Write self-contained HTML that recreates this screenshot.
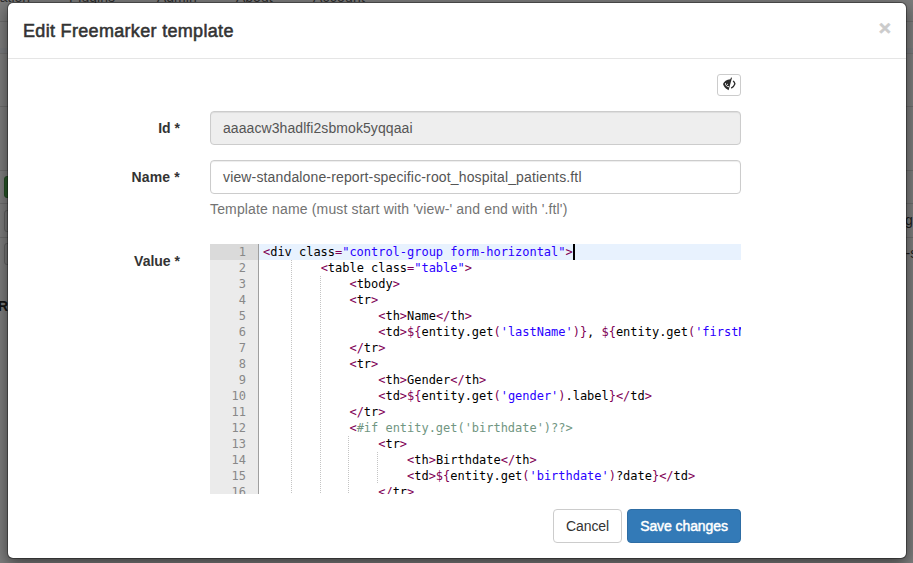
<!DOCTYPE html>
<html lang="en">
<head>
<meta charset="utf-8">
<title>Edit Freemarker template</title>
<style>
*{box-sizing:border-box}
html,body{margin:0;padding:0}
body{width:913px;height:563px;overflow:hidden;position:relative;background:#7f7f7f;font-family:"Liberation Sans",Arial,Helvetica,sans-serif;font-size:14px;line-height:1.42857143;color:#333}
/* darkened page behind the modal */
.bg{position:absolute;left:0;top:0;width:913px;height:563px;overflow:hidden}
.bg .nav{position:absolute;left:0;top:-29px;width:913px;height:51px;background:#7c7c7c;border-bottom:1px solid #6e6e6e}
.bg .nav span{position:absolute;top:16px;line-height:20px;font-size:14px;color:#2e2e2e;white-space:nowrap}
.bg .hl{position:absolute;left:0;width:913px;height:1px;background:#6f6f6f}
.bg .gbtn{position:absolute;left:4px;top:176px;width:60px;height:22px;border-radius:3px;background:#2a5a2a;border:1px solid #234c23}
.bg .obox{position:absolute;left:4px;width:60px;height:22px;border-radius:3px;border:1px solid #646464;background:#7b7b7b}
.bg .t{position:absolute;white-space:nowrap;color:#141414;font-size:14px;line-height:20px}
/* modal */
.modal{position:absolute;left:7px;top:2px;width:900px;height:557px;background:#fff;border:1px solid rgba(0,0,0,.35);border-radius:6px;box-shadow:0 5px 15px rgba(0,0,0,.5);background-clip:padding-box}
.mh{height:56px;padding:15px;border-bottom:1px solid #e5e5e5;position:relative}
.mh h4{margin:0;font-size:18px;font-weight:500;line-height:26px;color:#333;letter-spacing:.32px;-webkit-text-stroke:.55px #333}
.mh .close{position:absolute;right:15px;top:14px;-webkit-text-stroke:.6px #000;font-size:21px;font-weight:bold;line-height:1;color:#000;opacity:.2;text-shadow:0 1px 0 #fff;background:none;border:0;padding:0;font-family:inherit}
.mb{position:absolute;left:0;top:55px;width:898px;height:499px}
.eye{position:absolute;left:709px;top:16px;width:24px;height:22px;border:1px solid #ccc;border-radius:3px;background:#fff;padding:0}
.eye svg{position:absolute;left:4px;top:2px}
label{position:absolute;left:0;width:172px;text-align:right;font-weight:bold;color:#333;line-height:20px;margin:0}
.inp{position:absolute;left:202px;width:531px;height:34px;border:1px solid #ccc;border-radius:4px;padding:6px 12px;font-size:14px;line-height:20px;color:#555;background:#fff;box-shadow:inset 0 1px 1px rgba(0,0,0,.075);white-space:nowrap;overflow:hidden}
.inp.dis{background:#eee}
.help{letter-spacing:.155px;position:absolute;left:202px;top:141px;line-height:20px;color:#737373;white-space:nowrap}
/* ace editor */
.ace{position:absolute;left:202px;top:186px;width:531px;height:250px;overflow:hidden;background:#fff;font-family:"DejaVu Sans Mono","Liberation Mono",monospace;font-size:12px;line-height:16px;color:#000}
.gutter{position:absolute;left:0;top:0;width:49px;height:250px;background:#ebebeb;border-right:1px solid #9f9f9f;color:#888}
.gc{height:16px;padding-right:12px;text-align:right;letter-spacing:-0.024px}
.gc.act{background:#dadada}
.scr{position:absolute;left:49px;top:0;width:482px;height:250px;overflow:hidden}
.actl{position:absolute;left:0;top:0;width:482px;height:16px;background:#e8f2fe}
.txt{position:absolute;left:4px;top:0}
.ln{height:16px;white-space:pre;letter-spacing:-0.024px}
.k{color:#7f0055}.s{color:#2a00ff}.c{color:#719682}
.ig{display:inline-block;height:16px;vertical-align:top;background:linear-gradient(to bottom,#c4c4c4 50%,rgba(255,255,255,0) 50%) right top/1px 2px repeat-y}
.ig.last{background:none}
.cur{position:absolute;top:0;left:314px;width:2px;height:16px;background:#000}
.btn{position:absolute;top:451px;height:34px;border-radius:4px;font-size:14px;line-height:20px;padding:6px 12px;font-family:inherit;text-align:center;white-space:nowrap}
.btn.def{letter-spacing:-.1px;left:545px;width:69px;color:#333;background:#fff;border:1px solid #ccc}
.btn.pri{-webkit-text-stroke:.45px #fff;letter-spacing:-.09px;left:619px;width:114px;color:#fff;background:#337ab7;border:1px solid #2e6da4}
</style>
</head>
<body>
<div class="bg">
  <div class="nav">
    <span style="left:-36px">Navigation</span>
    <span style="left:69px">Plugins</span>
    <span style="left:157px">Admin</span>
    <span style="left:236px">About</span>
    <span style="left:313px;letter-spacing:.2px">Account</span>
  </div>
  <div class="hl" style="top:48px;height:5px;background:#7a7c7f"></div>
  <div class="hl" style="top:53px;background:#737373"></div>
  <div class="hl" style="top:106px"></div>
  <div class="hl" style="top:170px"></div>
  <div class="hl" style="top:203px"></div>
  <div class="hl" style="top:237px"></div>
  <div class="gbtn"></div>
  <div class="obox" style="top:210px"></div>
  <div class="obox" style="top:243px"></div>
  <div class="t" style="left:-2px;top:296px;font-weight:bold">R</div>
  <div class="t" style="left:905px;top:210px;color:#1c1c1c">g</div>
  <div class="t" style="left:905.5px;top:243px;color:#1c1c1c">-s</div>
</div>
<div class="modal">
  <div class="mh">
    <button class="close" type="button">×</button>
    <h4>Edit Freemarker template</h4>
  </div>
  <div class="mb">
    <button class="eye" type="button" title="Toggle preview"><svg width="16" height="16" viewBox="0 0 16 16"><path d="M10 0.7 L6.6 13.2 L5.5 12.6 C3.2 11.3 1.8 9.4 1 7 C2 4.4 4.6 2.4 8.4 2.3 L9 0.6 Z" fill="#2b2b2b"/><path d="M3.4 6.2 C3.5 8.4 4.8 9.6 7 9.8" fill="none" stroke="#fff" stroke-width="1"/><circle cx="5.5" cy="7.2" r="0.55" fill="#fff"/><path d="M11.2 3.9 C12 4.8 12.6 5.8 12.9 6.9 C12.3 8.7 11 10.2 9.2 11.2" stroke="#2b2b2b" stroke-width="1.4" fill="none"/></svg></button>
    <label style="top:60px">Id *</label>
    <div class="inp dis" style="top:53px;letter-spacing:.077px">aaaacw3hadlfi2sbmok5yqqaai</div>
    <label style="top:109px;letter-spacing:.17px">Name *</label>
    <div class="inp" style="top:102px;letter-spacing:.146px">view-standalone-report-specific-root_hospital_patients.ftl</div>
    <div class="help">Template name (must start with 'view-' and end with '.ftl')</div>
    <label style="top:193px">Value *</label>
    <div class="ace">
      <div class="gutter">
<div class="gc act">1</div>
<div class="gc">2</div>
<div class="gc">3</div>
<div class="gc">4</div>
<div class="gc">5</div>
<div class="gc">6</div>
<div class="gc">7</div>
<div class="gc">8</div>
<div class="gc">9</div>
<div class="gc">10</div>
<div class="gc">11</div>
<div class="gc">12</div>
<div class="gc">13</div>
<div class="gc">14</div>
<div class="gc">15</div>
<div class="gc">16</div>
      </div>
      <div class="scr">
        <div class="actl"></div>
        <div class="txt">
<div class="ln"><span class="k">&lt;</span>div class<span class="k">=</span><span class="s">"control-group form-horizontal"</span><span class="k">&gt;</span></div>
<div class="ln"><span class="ig">    </span><span class="ig last">    </span><span class="k">&lt;</span>table class<span class="k">=</span><span class="s">"table"</span><span class="k">&gt;</span></div>
<div class="ln"><span class="ig">    </span><span class="ig">    </span><span class="ig last">    </span><span class="k">&lt;</span>tbody<span class="k">&gt;</span></div>
<div class="ln"><span class="ig">    </span><span class="ig">    </span><span class="ig last">    </span><span class="k">&lt;</span>tr<span class="k">&gt;</span></div>
<div class="ln"><span class="ig">    </span><span class="ig">    </span><span class="ig last">    </span><span class="ig last">    </span><span class="k">&lt;</span>th<span class="k">&gt;</span>Name<span class="k">&lt;/</span>th<span class="k">&gt;</span></div>
<div class="ln"><span class="ig">    </span><span class="ig">    </span><span class="ig last">    </span><span class="ig last">    </span><span class="k">&lt;</span>td<span class="k">&gt;${</span>entity.get<span class="k">(</span><span class="s">'lastName'</span><span class="k">)}</span>, <span class="k">${</span>entity.get<span class="k">(</span><span class="s">'firstName'</span><span class="k">)}</span><span class="k">&lt;/</span>td<span class="k">&gt;</span></div>
<div class="ln"><span class="ig">    </span><span class="ig">    </span><span class="ig last">    </span><span class="k">&lt;/</span>tr<span class="k">&gt;</span></div>
<div class="ln"><span class="ig">    </span><span class="ig">    </span><span class="ig last">    </span><span class="k">&lt;</span>tr<span class="k">&gt;</span></div>
<div class="ln"><span class="ig">    </span><span class="ig">    </span><span class="ig last">    </span><span class="ig last">    </span><span class="k">&lt;</span>th<span class="k">&gt;</span>Gender<span class="k">&lt;/</span>th<span class="k">&gt;</span></div>
<div class="ln"><span class="ig">    </span><span class="ig">    </span><span class="ig last">    </span><span class="ig last">    </span><span class="k">&lt;</span>td<span class="k">&gt;${</span>entity.get<span class="k">(</span><span class="s">'gender'</span><span class="k">)</span>.label<span class="k">}&lt;/</span>td<span class="k">&gt;</span></div>
<div class="ln"><span class="ig">    </span><span class="ig">    </span><span class="ig last">    </span><span class="k">&lt;/</span>tr<span class="k">&gt;</span></div>
<div class="ln"><span class="ig">    </span><span class="ig">    </span><span class="ig last">    </span><span class="k">&lt;</span><span class="c">#if entity.get('birthdate')??&gt;</span></div>
<div class="ln"><span class="ig">    </span><span class="ig">    </span><span class="ig">    </span><span class="ig last">    </span><span class="k">&lt;</span>tr<span class="k">&gt;</span></div>
<div class="ln"><span class="ig">    </span><span class="ig">    </span><span class="ig">    </span><span class="ig">    </span><span class="ig last">    </span><span class="k">&lt;</span>th<span class="k">&gt;</span>Birthdate<span class="k">&lt;/</span>th<span class="k">&gt;</span></div>
<div class="ln"><span class="ig">    </span><span class="ig">    </span><span class="ig">    </span><span class="ig">    </span><span class="ig last">    </span><span class="k">&lt;</span>td<span class="k">&gt;${</span>entity.get<span class="k">(</span><span class="s">'birthdate'</span><span class="k">)</span>?date<span class="k">}&lt;/</span>td<span class="k">&gt;</span></div>
<div class="ln"><span class="ig">    </span><span class="ig">    </span><span class="ig">    </span><span class="ig last">    </span><span class="k">&lt;/</span>tr<span class="k">&gt;</span></div>
        </div>
        <div class="cur"></div>
      </div>
    </div>
    <button class="btn def" type="button">Cancel</button>
    <button class="btn pri" type="submit">Save changes</button>
  </div>
</div>
</body>
</html>
